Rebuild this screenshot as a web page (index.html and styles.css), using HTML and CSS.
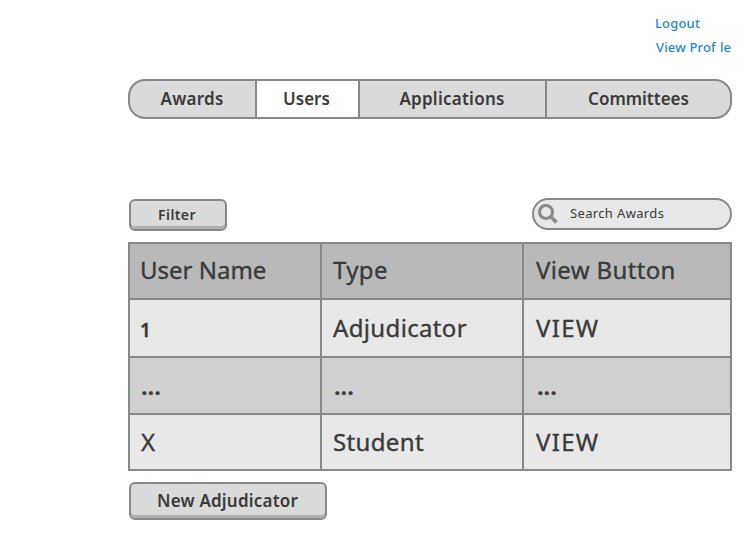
FILE: index.html
```html
<!DOCTYPE html>
<html lang="en">
<head>
<meta charset="utf-8">
<title>Users</title>
<link rel="stylesheet" href="styles.css">
</head>
<body>
<div class="account">
  <a class="logout"><span>Logout</span></a>
  <a class="profile"><span>View Prof</span><span class="profile-end">le</span></a>
</div>
<main>
  <nav class="tabs">
    <a class="tab awards"><span>Awards</span></a>
    <a class="tab users active"><span>Users</span></a>
    <a class="tab applications"><span>Applications</span></a>
    <a class="tab committees"><span>Committees</span></a>
  </nav>
  <div class="toolbar">
    <button class="button filter"><span>Filter</span></button>
    <div class="search">
      <svg width="20" height="20" viewBox="0 0 20 20" fill="none" stroke="#8b8b8b"><circle cx="8" cy="8" r="6.5" stroke-width="3.2"/><path d="M12.8 12.8L18.6 18.4" stroke-width="3.6"/></svg>
      <span>Search Awards</span>
    </div>
  </div>
  <div class="table">
    <div class="row head"><div><span class="name">User Name</span></div><div><span class="type">Type</span></div><div><span class="action">View Button</span></div></div>
    <div class="row"><div><span class="one">1</span></div><div><span class="role">Adjudicator</span></div><div><span class="view">VIEW</span></div></div>
    <div class="row alt"><div><span class="dots">...</span></div><div><span class="dots">...</span></div><div><span class="dots">...</span></div></div>
    <div class="row"><div><span class="last">X</span></div><div><span class="role">Student</span></div><div><span class="view">VIEW</span></div></div>
  </div>
  <button class="button create"><span>New Adjudicator</span></button>
</main>
</body>
</html>
```
FILE: styles.css
```css
* { box-sizing: border-box; }
body {
  margin: 0;
  background: #fff;
  color: #3a3a3a;
  font-family: "Noto Sans", sans-serif;
}
.account {
  height: 79px;
  padding: 11px 0 0 655px;
  color: #2585d3;
  font-size: 13px;
  font-weight: 500;
  letter-spacing: 0.17px;
}
.account a { display: block; height: 24px; line-height: 24px; white-space: nowrap; }
.profile { padding-left: 1px; }
.profile-end { margin-left: 4px; }
main { width: 604px; margin-left: 128px; }
.tabs {
  display: grid;
  grid-template-columns: 125px 103px 187px 185px;
  height: 40px;
  border: 2px solid #888;
  border-radius: 17px;
  overflow: hidden;
  background: #dadada;
}
.tab {
  text-align: center;
  font-size: 17px;
  font-weight: 600;
  line-height: 36px;
  border-left: 2px solid #888;
}
.tab:first-child { border-left: 0; }
.awards { padding-right: 1px; letter-spacing: 0.25px; }
.users { padding-right: 2px; }
.applications { letter-spacing: 0.25px; padding-right: 1px; }
.active { background: #fff; }
.toolbar {
  display: flex;
  justify-content: space-between;
  margin-top: 79px;
  height: 33px;
}
.button {
  display: block;
  margin: 1px 0 0 1px;
  padding: 0;
  border: 2px solid #888;
  border-radius: 6px;
  background: #dadada;
  box-shadow: inset 0 -3px #b0b0b0;
  color: inherit;
  font-family: inherit;
  font-weight: 600;
}
.filter { width: 98px; height: 32px; padding-right: 2px; font-size: 14px; line-height: 28px; letter-spacing: 0.4px; }
.search {
  display: flex;
  width: 200px;
  height: 32px;
  padding: 4px;
  border: 2px solid #888;
  border-radius: 16px;
  background: #e8e8e8;
  font-size: 13px;
  line-height: 19px;
  letter-spacing: 0.35px;
}
.search span { margin-left: 12px; }
.table {
  display: grid;
  grid-template-rows: 54px 56px 55px 54px;
  gap: 2px;
  margin-top: 11px;
  padding: 2px;
  background: #888;
}
.row { display: grid; grid-template-columns: 190px 200px 206px; gap: 2px; }
.row > div {
  display: flex;
  align-items: center;
  padding: 0 11px;
  background: #e8e8e8;
  font-size: 24px;
  font-weight: 400;
  line-height: 34px;
  -webkit-text-stroke: 0.35px #3a3a3a;
}
.row > div:first-child { padding-left: 10px; }
.row > div:last-child { padding-left: 12px; }
.head > div { background: #b9b9b9; }
.alt > div { background: #d0d0d0; }
.name { letter-spacing: 0; }
.type, .action, .role { letter-spacing: 0.35px; }
.view { letter-spacing: 1.3px; }
.dots { padding-left: 1px; font-weight: 600; }
.one { padding-top: 3px; font-size: 19px; font-weight: 600; }
.last { padding-left: 1px; }
.head span { padding-bottom: 2px; }
.create { width: 198px; height: 38px; margin-top: 11px; padding-right: 1px; font-size: 17px; line-height: 34px; letter-spacing: 0.2px; }
```
